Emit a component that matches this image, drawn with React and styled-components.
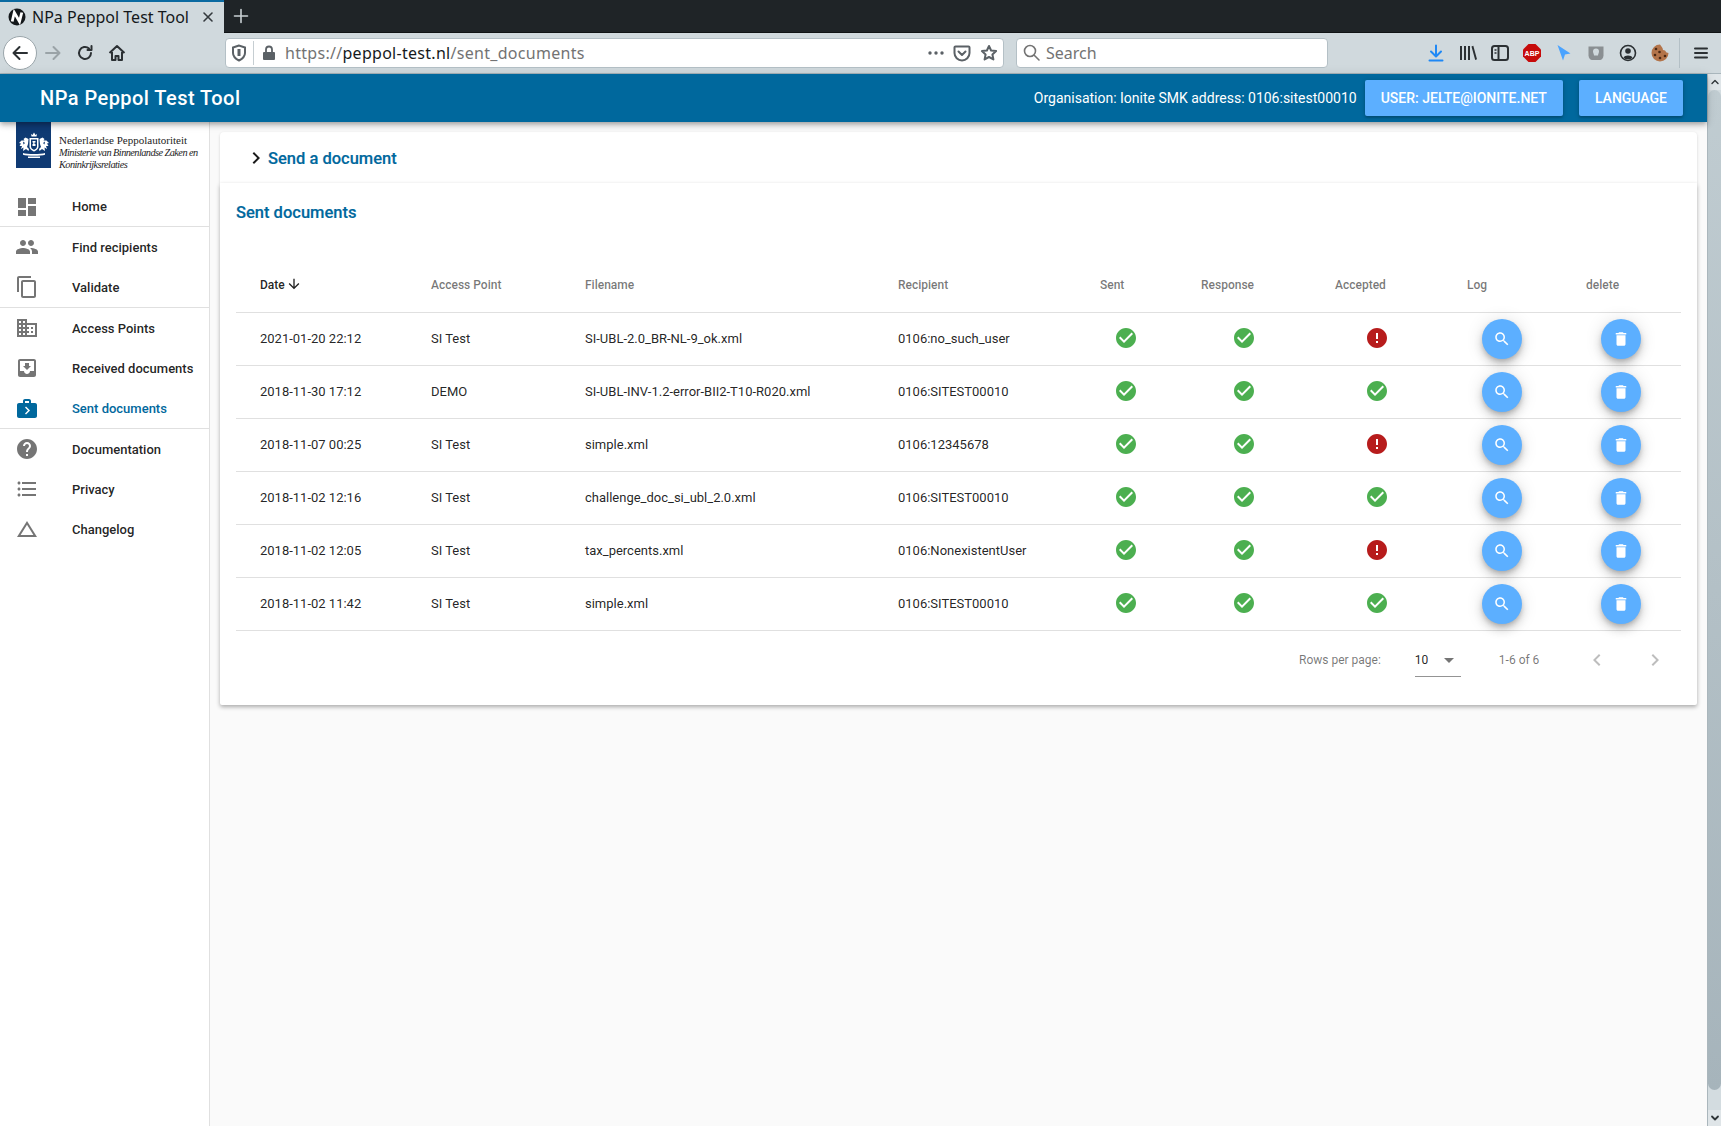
import React from "react";
import styled, { createGlobalStyle } from "styled-components";

const Global = createGlobalStyle`
  html, body { margin: 0; padding: 0; height: 100%; overflow: hidden; background: #fafafa; }
  * { box-sizing: border-box; }
  body { font-family: Roboto, "Liberation Sans", sans-serif; }
`;

const P = {
  dashboard: "M3 13h8V3H3v10zm0 8h8v-6H3v6zm10 0h8V11h-8v10zm0-18v6h8V3h-8z",
  people: "M16 11c1.66 0 2.99-1.34 2.99-3S17.66 5 16 5c-1.66 0-3 1.34-3 3s1.34 3 3 3zm-8 0c1.66 0 2.99-1.34 2.99-3S9.66 5 8 5C6.34 5 5 6.34 5 8s1.34 3 3 3zm0 2c-2.33 0-7 1.17-7 3.5V19h14v-2.5c0-2.33-4.67-3.5-7-3.5zm8 0c-.29 0-.62.02-.97.05 1.16.84 1.97 1.97 1.97 3.45V19h6v-2.5c0-2.33-4.67-3.5-7-3.5z",
  copy: "M16 1H4c-1.1 0-2 .9-2 2v14h2V3h12V1zm3 4H8c-1.1 0-2 .9-2 2v14c0 1.1.9 2 2 2h11c1.1 0 2-.9 2-2V7c0-1.1-.9-2-2-2zm0 16H8V7h11v14z",
  domain: "M12 7V3H2v18h20V7H12zM6 19H4v-2h2v2zm0-4H4v-2h2v2zm0-4H4V9h2v2zm0-4H4V5h2v2zm4 12H8v-2h2v2zm0-4H8v-2h2v2zm0-4H8V9h2v2zm0-4H8V5h2v2zm10 12h-8v-2h2v-2h-2v-2h2v-2h-2V9h8v10zm-2-8h-2v2h2v-2zm0 4h-2v2h2v-2z",
  inbox: "M19 3H4.99c-1.11 0-1.98.9-1.98 2L3 19c0 1.1.88 2 1.99 2H19c1.1 0 2-.9 2-2V5c0-1.1-.9-2-2-2zm0 12h-4c0 1.66-1.35 3-3 3s-3-1.34-3-3H4.99V5H19v10zm-3-5h-2V7h-4v3H8l4 4 4-4z",
  nextWeek: "M20 7h-4V5c0-.55-.22-1.05-.59-1.41C15.05 3.22 14.55 3 14 3h-4c-1.1 0-2 .9-2 2v2H4c-1.1 0-2 .9-2 2v11c0 1.1.9 2 2 2h16c1.1 0 2-.9 2-2V9c0-1.1-.9-2-2-2zM10 5h4v2h-4V5zm1 13.5l-1-1 3-3-3-3 1-1 4 4-4 4z",
  help: "M12 2C6.48 2 2 6.48 2 12s4.48 10 10 10 10-4.48 10-10S17.52 2 12 2zm1 17h-2v-2h2v2zm2.07-7.75l-.9.92C13.45 12.9 13 13.5 13 15h-2v-.5c0-1.1.45-2.1 1.17-2.83l1.24-1.26c.37-.36.59-.86.59-1.41 0-1.1-.9-2-2-2s-2 .9-2 2H8c0-2.21 1.79-4 4-4s4 1.79 4 4c0 .88-.36 1.68-.93 2.25z",
  list: "M4 10.5c-.83 0-1.5.67-1.5 1.5s.67 1.5 1.5 1.5 1.5-.67 1.5-1.5-.67-1.5-1.5-1.5zm0-6c-.83 0-1.5.67-1.5 1.5S3.17 7.5 4 7.5 5.5 6.83 5.5 6 4.83 4.5 4 4.5zm0 12c-.83 0-1.5.68-1.5 1.5s.68 1.5 1.5 1.5 1.5-.68 1.5-1.5-.67-1.5-1.5-1.5zM7 19h14v-2H7v2zm0-6h14v-2H7v2zm0-8v2h14V5H7z",
  change: "M12 7.77L18.39 18H5.61L12 7.77M12 4L2 20h20L12 4z",
  check: "M12 2C6.48 2 2 6.48 2 12s4.48 10 10 10 10-4.48 10-10S17.52 2 12 2zm-2 15l-5-5 1.41-1.41L10 14.17l7.59-7.59L19 8l-9 9z",
  error: "M12 2C6.48 2 2 6.48 2 12s4.48 10 10 10 10-4.48 10-10S17.52 2 12 2zm1 15h-2v-2h2v2zm0-4h-2V7h2v6z",
  search: "M15.5 14h-.79l-.28-.27C15.41 12.59 16 11.11 16 9.5 16 5.91 13.09 3 9.5 3S3 5.91 3 9.5 5.91 16 9.5 16c1.61 0 3.09-.59 4.23-1.57l.27.28v.79l5 4.99L20.49 19l-4.99-5zm-6 0C7.01 14 5 11.99 5 9.5S7.01 5 9.5 5 14 7.01 14 9.5 11.99 14 9.5 14z",
  trash: "M6 19c0 1.1.9 2 2 2h8c1.1 0 2-.9 2-2V7H6v12zM19 4h-3.5l-1-1h-5l-1 1H5v2h14V4z",
  down: "M20 12l-1.41-1.41L13 16.17V4h-2v12.17l-5.58-5.59L4 12l8 8 8-8z",
  right: "M10 6L8.59 7.41 13.17 12l-4.58 4.59L10 18l6-6z",
  left: "M15.41 7.41L14 6l-6 6 6 6 1.41-1.41L10.83 12z",
  caret: "M7 10l5 5 5-5z",
};

const Svg = styled.svg`
  display: block;
  flex: none;
  fill: ${(p) => p.$color || "currentColor"};
`;
const Icon = ({ d, size = 24, color }) => (
  <Svg width={size} height={size} viewBox="0 0 24 24" $color={color}><path d={d} /></Svg>
);

/* ---------- browser chrome ---------- */
const Page = styled.div`
  width: 1721px;
  height: 1126px;
  display: flex;
  flex-direction: column;
  overflow: hidden;
`;
const TabStrip = styled.div`
  height: 33px;
  flex: none;
  display: flex;
  background: #1f2427;
  border-bottom: 1px solid #101315;
`;
const Tab = styled.div`
  width: 224px;
  height: 33px;
  display: flex;
  align-items: center;
  padding: 0 0 1px 8px;
  gap: 6px;
  background: #d0d9dd;
  border-top: 2px solid #0a6aa1;
  font: 400 16px "Noto Sans", sans-serif;
  color: #14181b;
  white-space: nowrap;
`;
const TabClose = styled.span`
  margin-left: auto;
  margin-right: 9px;
  display: flex;
  color: #33393d;
`;
const NewTab = styled.div`
  width: 34px;
  display: flex;
  align-items: center;
  justify-content: center;
  color: #c9d0d4;
`;
const Toolbar = styled.div`
  height: 41px;
  flex: none;
  display: flex;
  align-items: center;
  background: #d0d9dd;
  border-bottom: 1px solid #a9b6bc;
  padding-left: 3px;
  color: #2b3033;
`;
const BackButton = styled.div`
  width: 34px;
  height: 34px;
  border-radius: 50%;
  background: #fff;
  border: 1px solid #9aa5aa;
  display: flex;
  align-items: center;
  justify-content: center;
`;
const NavButton = styled.div`
  width: 32px;
  display: flex;
  justify-content: center;
  color: ${(p) => p.$dim ? "#9aa3a7" : "#2b3033"};
`;
const UrlBox = styled.div`
  height: 30px;
  display: flex;
  align-items: center;
  background: #fff;
  border: 1px solid #b4c0c6;
  border-radius: 4px;
  font: 400 16px "Noto Sans", sans-serif;
  color: #737373;
  white-space: nowrap;
`;
const AddressBar = styled(UrlBox)`
  width: 779px;
  margin-left: 92px;
  padding-left: 5px;
`;
const SearchBar = styled(UrlBox)`
  width: 312px;
  margin-left: 12px;
  padding-left: 6px;
  gap: 5px;
`;
const UrlDivider = styled.span`
  width: 1px;
  height: 24px;
  background: #c6ced2;
  margin: 0 8px 0 6px;
`;
const UrlText = styled.span`
  margin-left: 9px;
  letter-spacing: .018em;
`;
const Host = styled.span`color: #15191c;`;
const UrlActions = styled.div`
  margin-left: auto;
  display: flex;
  align-items: center;
  gap: 9px;
  padding-right: 5px;
  color: #5b6166;
`;
const Tools = styled.div`
  display: flex;
  align-items: center;
  margin-left: 92px;
  color: #2b3033;
`;
const ToolSlot = styled.div`
  width: 32px;
  height: 24px;
  display: flex;
  align-items: center;
  justify-content: center;
`;
const ToolDivider = styled.span`
  width: 1px;
  height: 30px;
  background: #b4c0c6;
  margin: 0 5px 0 3px;
`;

/* ---------- app ---------- */
const Viewport = styled.div`
  flex: 1;
  min-height: 0;
  display: flex;
`;
const AppArea = styled.div`
  flex: 1;
  min-width: 0;
  display: flex;
  flex-direction: column;
`;
const AppBar = styled.header`
  height: 48px;
  flex: none;
  position: relative;
  z-index: 2;
  display: flex;
  align-items: center;
  padding: 0 24px 0 40px;
  background: #00689d;
  color: #fff;
  box-shadow: 0 2px 4px -1px rgba(0,0,0,.2), 0 4px 5px rgba(0,0,0,.14), 0 1px 10px rgba(0,0,0,.12);
`;
const AppTitle = styled.div`
  font-size: 20px;
  font-weight: 500;
  letter-spacing: .45px;
`;
const OrgText = styled.div`
  margin-left: auto;
  font-size: 14px;
  margin-right: 8px;
`;
const BarButton = styled.button`
  height: 36px;
  padding: 0 16px;
  margin-left: ${(p) => p.$gap || 0}px;
  border: 0;
  border-radius: 2px;
  background: #5cafff;
  color: #fff;
  font: 500 14px Roboto, sans-serif;
  text-transform: uppercase;
  box-shadow: 0 1px 5px rgba(0,0,0,.2), 0 2px 2px rgba(0,0,0,.14);
`;
const Body = styled.div`
  flex: 1;
  min-height: 0;
  display: flex;
  background: #fafafa;
`;
const Sidebar = styled.nav`
  width: 210px;
  flex: none;
  background: #fff;
  border-right: 1px solid #e0e0e0;
`;
const LogoBlock = styled.div`
  height: 65px;
  display: flex;
  padding-left: 16px;
  gap: 8px;
`;
const LogoMark = styled.div`
  width: 35px;
  height: 46px;
  background: #0f3a73;
  display: flex;
  align-items: center;
  justify-content: center;
  flex: none;
`;
const LogoText = styled.div`
  font: 400 10px/12.5px "Liberation Serif", serif;
  color: #1d1d1d;
  padding-top: 12px;
  white-space: nowrap;
`;
const LogoName = styled.div`
  font-size: 11px;
`;
const LogoSub = styled.div`
  font-style: italic;
  font-size: 10.3px;
  letter-spacing: -.55px;
`;
const NavGroup = styled.div`
  border-bottom: ${(p) => p.$last ? "0" : "1px solid #e0e0e0"};
`;
const NavItem = styled.div`
  height: ${(p) => p.$h || 40}px;
  display: flex;
  align-items: center;
  padding-left: 15px;
  gap: 33px;
  color: rgba(0,0,0,.54);
`;
const NavLabel = styled.span`
  font-size: 13px;
  font-weight: 500;
  color: ${(p) => p.$active ? "#00689d" : "rgba(0,0,0,.87)"};
`;
const Main = styled.main`
  flex: 1;
  min-width: 0;
  padding: 10px 10px 0;
`;
const ExpandPanel = styled.section`
  height: 51px;
  display: flex;
  align-items: center;
  padding: 1px 0 0 24px;
  background: #fff;
  border-radius: 4px 4px 0 0;
  box-shadow: 0 1px 3px rgba(0,0,0,.16);
  color: #1a1a1a;
`;
const PanelTitle = styled.div`
  font-size: 16.5px;
  font-weight: 500;
  color: #00689d;
  -webkit-text-stroke: .15px #00689d;
`;
const Card = styled.section`
  height: 522px;
  padding: 0 16px;
  background: #fff;
  position: relative;
  border-radius: 0 0 2px 2px;
  box-shadow: 0 2px 4px rgba(0,0,0,.32);
`;
const CardHead = styled.div`
  height: 74px;
  padding-top: 20px;
`;
const columns = "195px 154px 313px 202px 101px 134px 132px 119px 95px";
const HeadRow = styled.div`
  height: 56px;
  display: grid;
  grid-template-columns: ${columns};
  align-items: center;
  border-bottom: 1px solid #e0e0e0;
  font-size: 12px;
  font-weight: 500;
  color: rgba(0,0,0,.54);
`;
const Row = styled.div`
  height: 53px;
  display: grid;
  grid-template-columns: ${columns};
  align-items: center;
  border-bottom: 1px solid #e0e0e0;
  font-size: 13px;
  color: rgba(0,0,0,.87);
`;
const Cell = styled.div`
  padding-left: ${(p) => p.$indent || 0}px;
  min-width: 0;
  white-space: nowrap;
`;
const RowCell = styled(Cell)`
  padding-bottom: 2px;
`;
const SortedHead = styled(Cell)`
  display: flex;
  align-items: center;
  gap: 1px;
  color: rgba(0,0,0,.87);
`;
const SortArrow = styled.span`
  margin-top: -2px;
`;
const RoundButton = styled.button`
  width: 40px;
  height: 40px;
  padding: 0;
  border: 0;
  border-radius: 50%;
  background: #5cafff;
  display: flex;
  align-items: center;
  justify-content: center;
  box-shadow: 0 3px 5px -1px rgba(0,0,0,.2), 0 6px 10px rgba(0,0,0,.14), 0 1px 18px rgba(0,0,0,.12);
`;
const Footer = styled.div`
  height: 75px;
  padding: 0 0 18px;
  display: flex;
  align-items: center;
  font-size: 12px;
  color: rgba(0,0,0,.54);
`;
const RowsLabel = styled.span`margin-left: 1063px;`;
const PerPage = styled.div`
  width: 46px;
  height: 34px;
  margin-left: 34px;
  padding-top: 2px;
  display: flex;
  align-items: center;
  justify-content: space-between;
  border-bottom: 1px solid rgba(0,0,0,.42);
  color: rgba(0,0,0,.87);
`;
const PageInfo = styled.span`margin-left: 38px;`;
const PageNav = styled.div`
  display: flex;
  align-items: center;
  margin-left: 46px;
  gap: 34px;
  color: rgba(0,0,0,.26);
`;
const Scrollbar = styled.div`
  width: 14px;
  flex: none;
  display: flex;
  flex-direction: column;
  background: #d3dce0;
  border-left: 1px solid #aab6bc;
`;
const ScrollArrow = styled.div`
  height: 16px;
  flex: none;
  background: #dfe5e8;
  display: flex;
  align-items: center;
  justify-content: center;
  color: #2f3538;
`;
const ScrollThumb = styled.div`
  flex: 1;
  border-radius: 7px;
  background: linear-gradient(#c0ccd1, #a6b4bb);
  margin-bottom: 20px;
`;

/* ---------- drawings ---------- */
const Favicon = () => (
  <svg width="18" height="18" viewBox="0 0 18 18">
    <circle cx="9" cy="9" r="8.500" fill="#14181b" />
    <path d="M4.200 13.500 6.300 4.500 11.500 13.500 13.800 4.500" fill="none" stroke="#fff" strokeWidth="2.800" />
  </svg>
);
const Line = ({ d, size = 20, w = 2, color = "currentColor", box = 20 }) => (
  <svg width={size} height={size} viewBox={`0 0 ${box} ${box}`} fill="none" stroke={color} strokeWidth={w} strokeLinecap="round" strokeLinejoin="round">
    <path d={d} />
  </svg>
);
const Crest = () => (
  <svg width="32" height="30" viewBox="0 0 32 30" fill="#fff">
    <path d="M13.500 6.500l-.5-2.500 1.500 1 1.500-2.500 1.500 2.500 1.500-1-.5 2.500z" />
    <path d="M11.500 8h9v8.500c0 2.700-2.700 4.300-4.500 5-1.800-.7-4.500-2.300-4.500-5z" />
    <path d="M13 9.500h6v7c0 1.800-1.700 2.800-3 3.400-1.300-.6-3-1.600-3-3.400z" fill="#0f3a73" />
    <path d="M14.500 11h3v1.500h-1v1.500h1v2h-3v-2h.7v-1.500h-.7z" />
    <path d="M10.500 9 7.500 7.500 5.500 9 6.500 10.500 3.500 10.500 1 13 3 13.500 1.500 16 4 16 3 19 5.500 17.500 5 21 8 19 10.500 21 11 19 9 17 10 14z" />
    <path d="M21.500 9 24.500 7.500 26.500 9 25.500 10.500 28.500 10.500 31 13 29 13.500 30.500 16 28 16 29 19 26.500 17.500 27 21 24 19 21.500 21 21 19 23 17 22 14z" />
    <path d="M5 11.500l2 1.500-1.500 1.500zM27 11.500l-2 1.500 1.500 1.500z" fill="#0f3a73" />
    <path d="M5 23c4 1.300 18 1.300 22 0v1.800c-4 1.300-18 1.300-22 0zM10 26.500h12V28H10z" />
  </svg>
);
const AbpText = styled.text`
  font: 700 7px "Liberation Sans", sans-serif;
  fill: #fff;
`;

const rows = [
  ["2021-01-20 22:12", "SI Test", "SI-UBL-2.0_BR-NL-9_ok.xml", "0106:no_such_user", false],
  ["2018-11-30 17:12", "DEMO", "SI-UBL-INV-1.2-error-BII2-T10-R020.xml", "0106:SITEST00010", true],
  ["2018-11-07 00:25", "SI Test", "simple.xml", "0106:12345678", false],
  ["2018-11-02 12:16", "SI Test", "challenge_doc_si_ubl_2.0.xml", "0106:SITEST00010", true],
  ["2018-11-02 12:05", "SI Test", "tax_percents.xml", "0106:NonexistentUser", false],
  ["2018-11-02 11:42", "SI Test", "simple.xml", "0106:SITEST00010", true],
];

const nav = [
  [["Home", P.dashboard, 39]],
  [["Find recipients", P.people], ["Validate", P.copy]],
  [["Access Points", P.domain], ["Received documents", P.inbox], ["Sent documents", P.nextWeek, 40, true]],
  [["Documentation", P.help], ["Privacy", P.list], ["Changelog", P.change]],
];

export default function App() {
  return (
    <Page>
      <Global />
      <TabStrip>
        <Tab>
          <Favicon />
          <span>NPa Peppol Test Tool</span>
          <TabClose><Line size={14} box={14} w={1.600} d="M3 3l8 8M11 3l-8 8" /></TabClose>
        </Tab>
        <NewTab><Line size={16} box={16} w={1.600} d="M8 1.500v13M1.500 8h13" /></NewTab>
      </TabStrip>
      <Toolbar>
        <BackButton><Line size={20} d="M17 10H3.500M9.500 4l-6 6 6 6" /></BackButton>
        <NavButton $dim><Line size={20} d="M3 10h13.500M10.500 4l6 6-6 6" /></NavButton>
        <NavButton><Line size={18} box={18} d="M15 9a6 6 0 1 1-2-4.500M15.500 2v4h-4" /></NavButton>
        <NavButton>
          <svg width="18" height="18" viewBox="0 0 18 18" fill="none" stroke="currentColor" strokeWidth="2" strokeLinejoin="round">
            <path d="M1.500 9 9 2l7.500 7M4 8v8h3.500v-4h3v4H14V8" />
          </svg>
        </NavButton>
        <AddressBar>
          <svg width="16" height="18" viewBox="0 0 16 18" fill="none" stroke="#5b6166" strokeWidth="2">
            <path d="M8 1.500 2 3.500V9c0 3.500 3 6 6 7.500 3-1.500 6-4 6-7.500V3.500z" />
            <path d="M8 5v7" strokeWidth="3" />
          </svg>
          <UrlDivider />
          <svg width="14" height="16" viewBox="0 0 14 16" fill="#5b6166">
            <path d="M2 7h10a1 1 0 0 1 1 1v6a1 1 0 0 1-1 1H2a1 1 0 0 1-1-1V8a1 1 0 0 1 1-1z" />
            <path d="M4 7V4.500a3 3 0 0 1 6 0V7" fill="none" stroke="#5b6166" strokeWidth="1.800" />
          </svg>
          <UrlText>https://<Host>peppol-test.nl</Host>/sent_documents</UrlText>
          <UrlActions>
            <svg width="16" height="4" viewBox="0 0 16 4" fill="#5b6166"><circle cx="2" cy="2" r="1.700" /><circle cx="8" cy="2" r="1.700" /><circle cx="14" cy="2" r="1.700" /></svg>
            <svg width="18" height="17" viewBox="0 0 18 17" fill="none" stroke="#5b6166" strokeWidth="2" strokeLinecap="round" strokeLinejoin="round">
              <path d="M2.500 1.500h13a1 1 0 0 1 1 1V8a7.500 7.500 0 0 1-15 0V2.500a1 1 0 0 1 1-1z" /><path d="M5.500 6.500 9 10l3.500-3.500" />
            </svg>
            <svg width="18" height="18" viewBox="0 0 18 18" fill="none" stroke="#5b6166" strokeWidth="2" strokeLinejoin="round">
              <path d="m9 2 2.100 4.500 5 .6-3.700 3.400 1 4.900L9 13l-4.400 2.400 1-4.900L1.900 7.100l5-.6z" />
            </svg>
          </UrlActions>
        </AddressBar>
        <SearchBar>
          <Line size={18} box={18} w={1.600} color="#737373" d="M11.500 11.500 16 16M12.500 7a5.500 5.500 0 1 1-11 0 5.500 5.500 0 0 1 11 0z" />
          <span>Search</span>
        </SearchBar>
        <Tools>
          <ToolSlot><Line size={18} box={18} color="#1e88f5" d="M9 1.500v10M4 7.500l5 5 5-5M2.500 16.500h13" /></ToolSlot>
          <ToolSlot>
            <svg width="18" height="16" viewBox="0 0 18 16" fill="#2b3033"><path d="M1 1h2v14H1zM5 1h2v14H5zM9 1h2v14H9zM12.500 1.400l1.800-.7 3.700 13.600-1.800.7z" /></svg>
          </ToolSlot>
          <ToolSlot>
            <svg width="18" height="16" viewBox="0 0 18 16" fill="none" stroke="#2b3033" strokeWidth="2"><rect x="1" y="1" width="16" height="14" rx="2.500" /><path d="M7.500 1v14" /><path d="M3.500 5h2M3.500 8h2" strokeWidth="1.400" /></svg>
          </ToolSlot>
          <ToolSlot>
            <svg width="18" height="18" viewBox="0 0 18 18"><path d="M5.500 0h7L18 5.500v7L12.500 18h-7L0 12.500v-7z" fill="#c60b0b" /><AbpText x="9" y="11.500" textAnchor="middle">ABP</AbpText></svg>
          </ToolSlot>
          <ToolSlot>
            <svg width="16" height="18" viewBox="0 0 16 18" fill="#4aa3ff"><path d="M1.500 1 14.500 9.500 9 10.500 7 16.500z" /></svg>
          </ToolSlot>
          <ToolSlot>
            <svg width="18" height="17" viewBox="0 0 18 17"><path d="M1.500 1.500h15v9c0 2.500-2 4.500-3.500 4.500H5c-1.500 0-3.500-2-3.500-4.500z" fill="#8a8f92" /><path d="M6 6.500a3 3 0 0 1 6 0c0 1.500-1 2.500-1 4H7c0-1.500-1-2.500-1-4z" fill="#d0d9dd" /></svg>
          </ToolSlot>
          <ToolSlot>
            <svg width="18" height="18" viewBox="0 0 18 18"><circle cx="9" cy="9" r="7.500" fill="none" stroke="#2b3033" strokeWidth="1.600" /><circle cx="9" cy="7" r="2.800" fill="#2b3033" /><path d="M4.500 13.500c1-2.800 8-2.800 9 0l-2 1.700h-5z" fill="#2b3033" /></svg>
          </ToolSlot>
          <ToolSlot>
            <svg width="18" height="18" viewBox="0 0 18 18"><path d="M9 .5a8.500 8.500 0 1 0 8.500 8.500l-2-.5-1.500-2-2-.5-.5-2z" fill="#b3744a" /><circle cx="5" cy="5" r="1.300" fill="#4a2814" /><circle cx="8.500" cy="8" r="1.300" fill="#4a2814" /><circle cx="4" cy="11" r="1.300" fill="#4a2814" /><circle cx="9" cy="14" r="1.300" fill="#4a2814" /><circle cx="14" cy="12" r="1.300" fill="#4a2814" /></svg>
          </ToolSlot>
          <ToolDivider />
          <ToolSlot><Line size={14} box={14} w={2} d="M1 2.500h12M1 7h12M1 11.500h12" /></ToolSlot>
        </Tools>
      </Toolbar>
      <Viewport>
        <AppArea>
          <AppBar>
            <AppTitle>NPa Peppol Test Tool</AppTitle>
            <OrgText>Organisation: Ionite SMK address: 0106:sitest00010</OrgText>
            <BarButton>User: jelte@ionite.net</BarButton>
            <BarButton $gap={16}>Language</BarButton>
          </AppBar>
          <Body>
            <Sidebar>
              <LogoBlock>
                <LogoMark><Crest /></LogoMark>
                <LogoText>
                  <LogoName>Nederlandse Peppolautoriteit</LogoName>
                  <LogoSub>Ministerie van Binnenlandse Zaken en</LogoSub>
                  <LogoSub>Koninkrijksrelaties</LogoSub>
                </LogoText>
              </LogoBlock>
              {nav.map((group, i) => (
                <NavGroup key={i} $last={i === nav.length - 1}>
                  {group.map(([label, d, h, active]) => (
                    <NavItem key={label} $h={h}>
                      <Icon d={d} color={active ? "#00689d" : undefined} />
                      <NavLabel $active={active}>{label}</NavLabel>
                    </NavItem>
                  ))}
                </NavGroup>
              ))}
            </Sidebar>
            <Main>
              <ExpandPanel>
                <Icon d={P.right} />
                <PanelTitle>Send a document</PanelTitle>
              </ExpandPanel>
              <Card>
                <CardHead><PanelTitle>Sent documents</PanelTitle></CardHead>
                <HeadRow>
                  <SortedHead $indent={24}>Date <SortArrow><Icon d={P.down} size={16} /></SortArrow></SortedHead>
                  <Cell>Access Point</Cell>
                  <Cell>Filename</Cell>
                  <Cell>Recipient</Cell>
                  <Cell>Sent</Cell>
                  <Cell>Response</Cell>
                  <Cell>Accepted</Cell>
                  <Cell>Log</Cell>
                  <Cell>delete</Cell>
                </HeadRow>
                {rows.map(([date, ap, file, rec, ok]) => (
                  <Row key={date + file}>
                    <RowCell $indent={24}>{date}</RowCell>
                    <RowCell>{ap}</RowCell>
                    <RowCell>{file}</RowCell>
                    <RowCell>{rec}</RowCell>
                    <RowCell $indent={14}><Icon d={P.check} color="#4caf50" /></RowCell>
                    <RowCell $indent={31}><Icon d={P.check} color="#4caf50" /></RowCell>
                    <RowCell $indent={30}><Icon d={ok ? P.check : P.error} color={ok ? "#4caf50" : "#b71c1c"} /></RowCell>
                    <Cell $indent={15}><RoundButton><Icon d={P.search} size={18} color="#fff" /></RoundButton></Cell>
                    <Cell $indent={15}><RoundButton><Icon d={P.trash} size={18} color="#fff" /></RoundButton></Cell>
                  </Row>
                ))}
                <Footer>
                  <RowsLabel>Rows per page:</RowsLabel>
                  <PerPage>10<Icon d={P.caret} color="rgba(0,0,0,.54)" /></PerPage>
                  <PageInfo>1-6 of 6</PageInfo>
                  <PageNav><Icon d={P.left} /><Icon d={P.right} /></PageNav>
                </Footer>
              </Card>
            </Main>
          </Body>
        </AppArea>
        <Scrollbar>
          <ScrollArrow><Line size={10} box={10} w={1.400} d="M2 6.500 5 3.500l3 3" /></ScrollArrow>
          <ScrollThumb />
          <ScrollArrow><Line size={10} box={10} w={1.800} d="M2 3.500 5 6.500l3-3" /></ScrollArrow>
        </Scrollbar>
      </Viewport>
    </Page>
  );
}
